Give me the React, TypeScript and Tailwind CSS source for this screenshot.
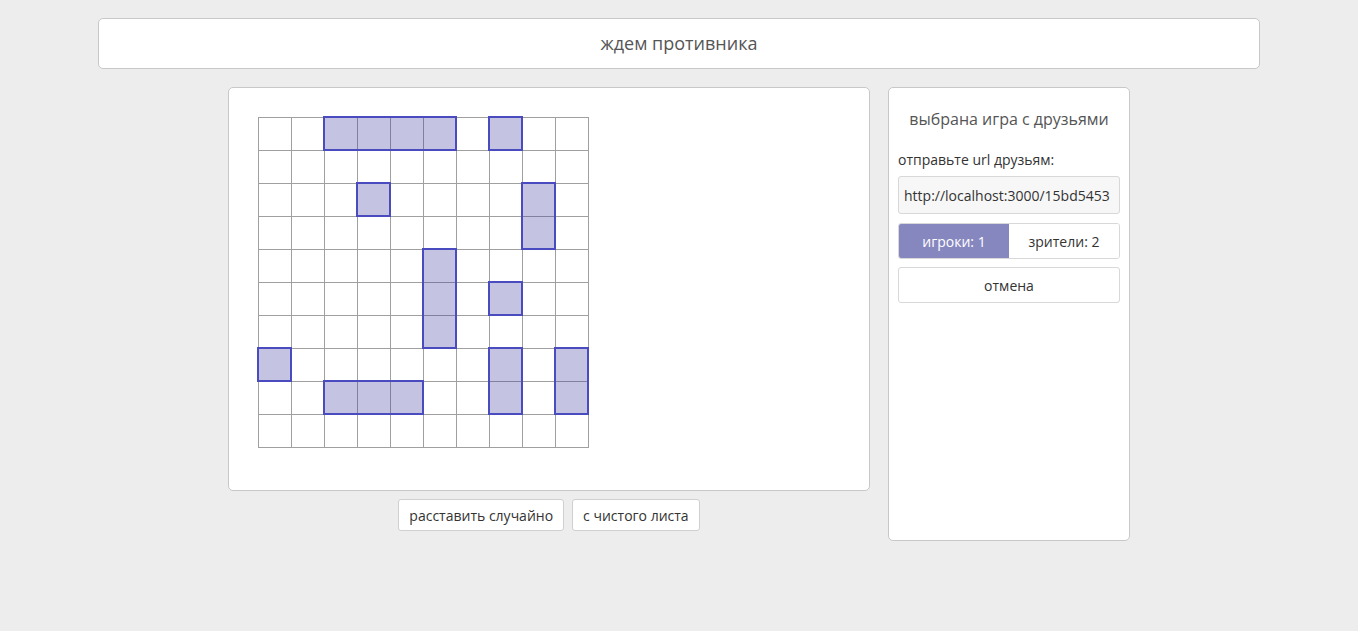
import React from 'react';

const CELL = 33;

interface Ship {
  col: number;
  row: number;
  len: number;
  vertical?: boolean;
}

const ships: Ship[] = [
  { col: 2, row: 0, len: 4 },
  { col: 7, row: 0, len: 1 },
  { col: 3, row: 2, len: 1 },
  { col: 8, row: 2, len: 2, vertical: true },
  { col: 5, row: 4, len: 3, vertical: true },
  { col: 7, row: 5, len: 1 },
  { col: 0, row: 7, len: 1 },
  { col: 2, row: 8, len: 3 },
  { col: 7, row: 7, len: 2, vertical: true },
  { col: 9, row: 7, len: 2, vertical: true },
];

function Board() {
  const cells = Array.from({ length: 100 }, (_, i) => i);
  return (
    <div className="relative w-[331px] h-[331px] border-l border-t border-[#a0a0a0]">
      <div className="grid grid-cols-[repeat(10,33px)] grid-rows-[repeat(10,33px)]">
        {cells.map((i) => (
          <div key={i} className="border-r border-b border-[#a0a0a0] bg-white" />
        ))}
      </div>
      {ships.map((s, i) => (
        <div
          key={i}
          className="absolute border-2 border-[#4b4bc0] bg-[#3c3ca0]/30"
          style={{
            left: s.col * CELL - 2,
            top: s.row * CELL - 2,
            width: (s.vertical ? 1 : s.len) * CELL + 2,
            height: (s.vertical ? s.len : 1) * CELL + 2,
          }}
        />
      ))}
    </div>
  );
}

export default function App() {
  return (
    <div
      className="min-h-screen bg-[#ededed] text-[#333] pt-[18px]"
      style={{ fontFamily: '"Open Sans", "Noto Sans", sans-serif' }}
    >
      <div className="mx-auto w-[1162px] h-[51px] bg-white border border-[#c8c8c8] rounded-[5px] flex items-center justify-center text-[18px] text-[#555]">
        ждем противника
      </div>

      <div className="flex justify-center gap-[18px] mt-[18px]">
        <div className="flex flex-col items-center">
          <div className="w-[642px] h-[404px] bg-white border border-[#c8c8c8] rounded-[5px] pt-[29px] pl-[29px]">
            <Board />
          </div>
          <div className="flex gap-2 mt-2">
            <button className="h-[32px] px-[10px] bg-white border border-[#d0d0d0] rounded-[3px] text-[14px] text-[#333]">
              расставить случайно
            </button>
            <button className="h-[32px] px-[10px] bg-white border border-[#d0d0d0] rounded-[3px] text-[14px] text-[#333]">
              с чистого листа
            </button>
          </div>
        </div>

        <div className="w-[242px] h-[454px] bg-white border border-[#c8c8c8] rounded-[5px] px-[9px] flex flex-col">
          <div className="text-center text-[16px] text-[#555] mt-[19px]">выбрана игра с друзьями</div>
          <div className="text-[14px] text-[#333] mt-[18px]">отправьте url друзьям:</div>
          <div className="mt-[6px] h-[38px] bg-[#f7f7f7] border border-[#d8d8d8] rounded-[3px] flex items-center px-[5px] text-[14px] text-[#333] overflow-hidden whitespace-nowrap">
            http://localhost:3000/15bd5453
          </div>
          <div className="mt-[9px] h-[36px] border border-[#d8d8d8] rounded-[3px] flex overflow-hidden text-[14px]">
            <div className="flex-1 bg-[#8787c0] text-white flex items-center justify-center">игроки: 1</div>
            <div className="flex-1 bg-white text-[#333] flex items-center justify-center">зрители: 2</div>
          </div>
          <button className="mt-[8px] h-[36px] bg-white border border-[#d8d8d8] rounded-[3px] text-[14px] text-[#333]">
            отмена
          </button>
        </div>
      </div>
    </div>
  );
}
